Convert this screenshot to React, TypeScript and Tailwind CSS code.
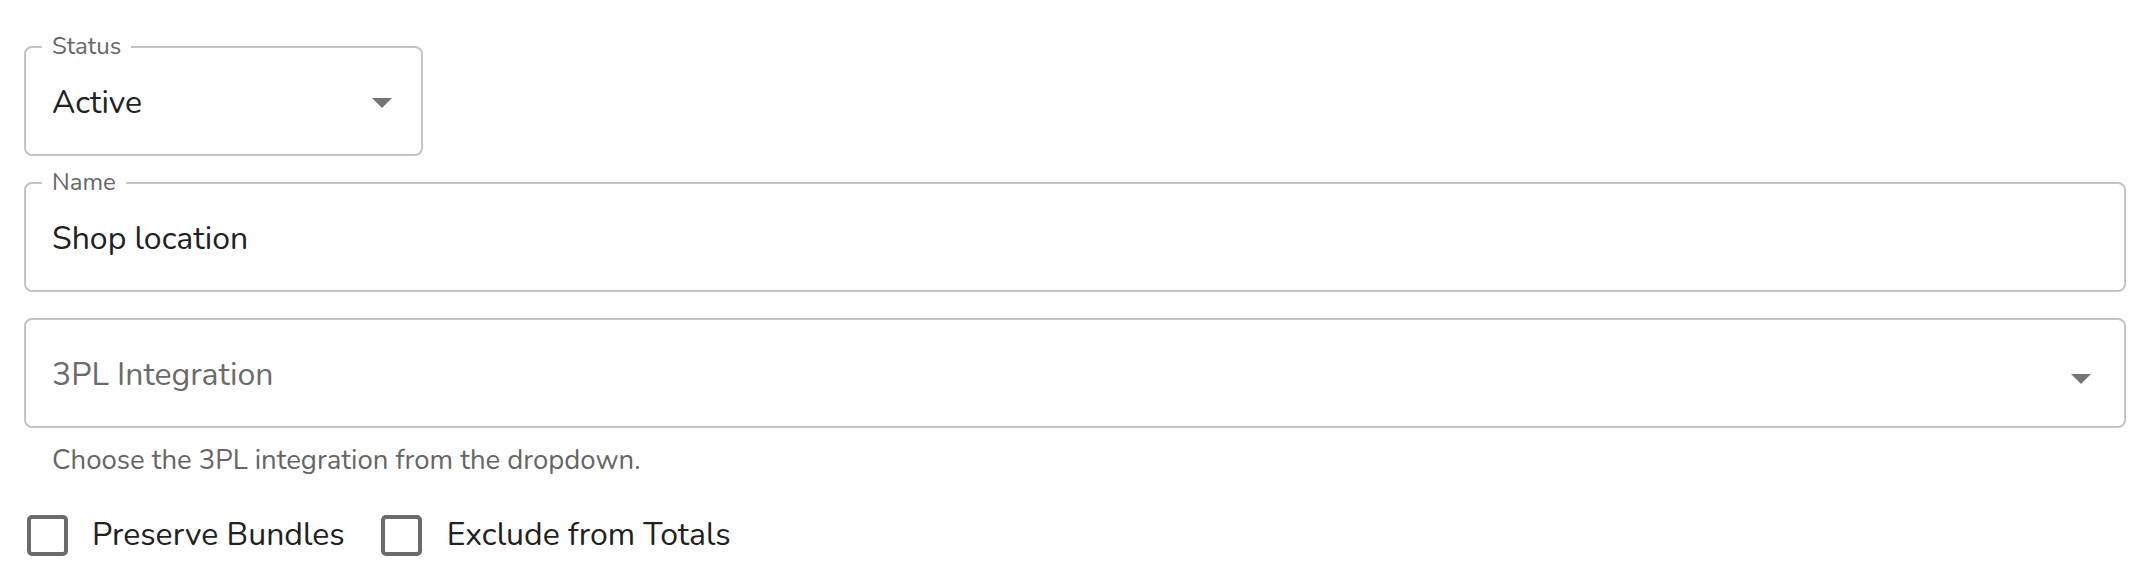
import React from "react";

const font = { fontFamily: "Nunito, Lato, 'Open Sans', sans-serif" };

function Arrow({ className }: { className?: string }) {
  return (
    <svg viewBox="0 0 24 24" className={className} fill="#757575">
      <path d="M7 10l5 5 5-5z" />
    </svg>
  );
}

function CheckBox({ label }: { label: string }) {
  return (
    <label className="flex items-center">
      <span className="flex h-[84px] w-[84px] items-center justify-center -ml-[19px] mr-[3px]">
        <span className="block h-[41px] w-[41px] rounded-[5px] border-[4px] border-[#6b6b6b]" />
      </span>
      <span className="text-[32px] leading-[40px] text-[#212121]">{label}</span>
    </label>
  );
}

export default function App() {
  return (
    <div className="min-h-[584px] bg-white pl-[24px] pr-[22px] pt-[46px]" style={font}>
      {/* Status */}
      <div className="relative h-[110px] w-[399px] rounded-[8px] border-2 border-[#c4c4c4]">
        <span className="absolute -top-[19px] left-[16px] bg-white px-[10px] text-[24px] leading-[34px] text-[#666666]">
          Status
        </span>
        <div className="flex h-full items-center justify-between pl-[26px] pr-[15px]">
          <span className="translate-y-[2px] text-[32px] text-[#212121]">Active</span>
          <Arrow className="h-[48px] w-[48px] translate-y-[1px]" />
        </div>
      </div>

      {/* Name */}
      <div className="relative mt-[26px] h-[110px] w-full rounded-[8px] border-2 border-[#c4c4c4]">
        <span className="absolute -top-[19px] left-[16px] bg-white px-[10px] text-[24px] leading-[34px] text-[#666666]">
          Name
        </span>
        <div className="flex h-full items-center pl-[26px]">
          <span className="translate-y-[2px] text-[32px] text-[#212121]">Shop location</span>
        </div>
      </div>

      {/* 3PL */}
      <div className="mt-[26px] h-[110px] w-full rounded-[8px] border-2 border-[#c4c4c4]">
        <div className="flex h-full items-center justify-between pl-[26px] pr-[19px]">
          <span className="translate-y-[2px] text-[32px] text-[#6b6b6b]">3PL Integration</span>
          <Arrow className="h-[48px] w-[48px] translate-y-[5px]" />
        </div>
      </div>
      <p className="ml-[28px] mt-[12px] text-[27.5px] leading-[40px] text-[#666666]">
        Choose the 3PL integration from the dropdown.
      </p>

      {/* Checkboxes */}
      <div className="mt-[13px] flex items-center gap-[34px]">
        <CheckBox label="Preserve Bundles" />
        <CheckBox label="Exclude from Totals" />
      </div>
    </div>
  );
}
